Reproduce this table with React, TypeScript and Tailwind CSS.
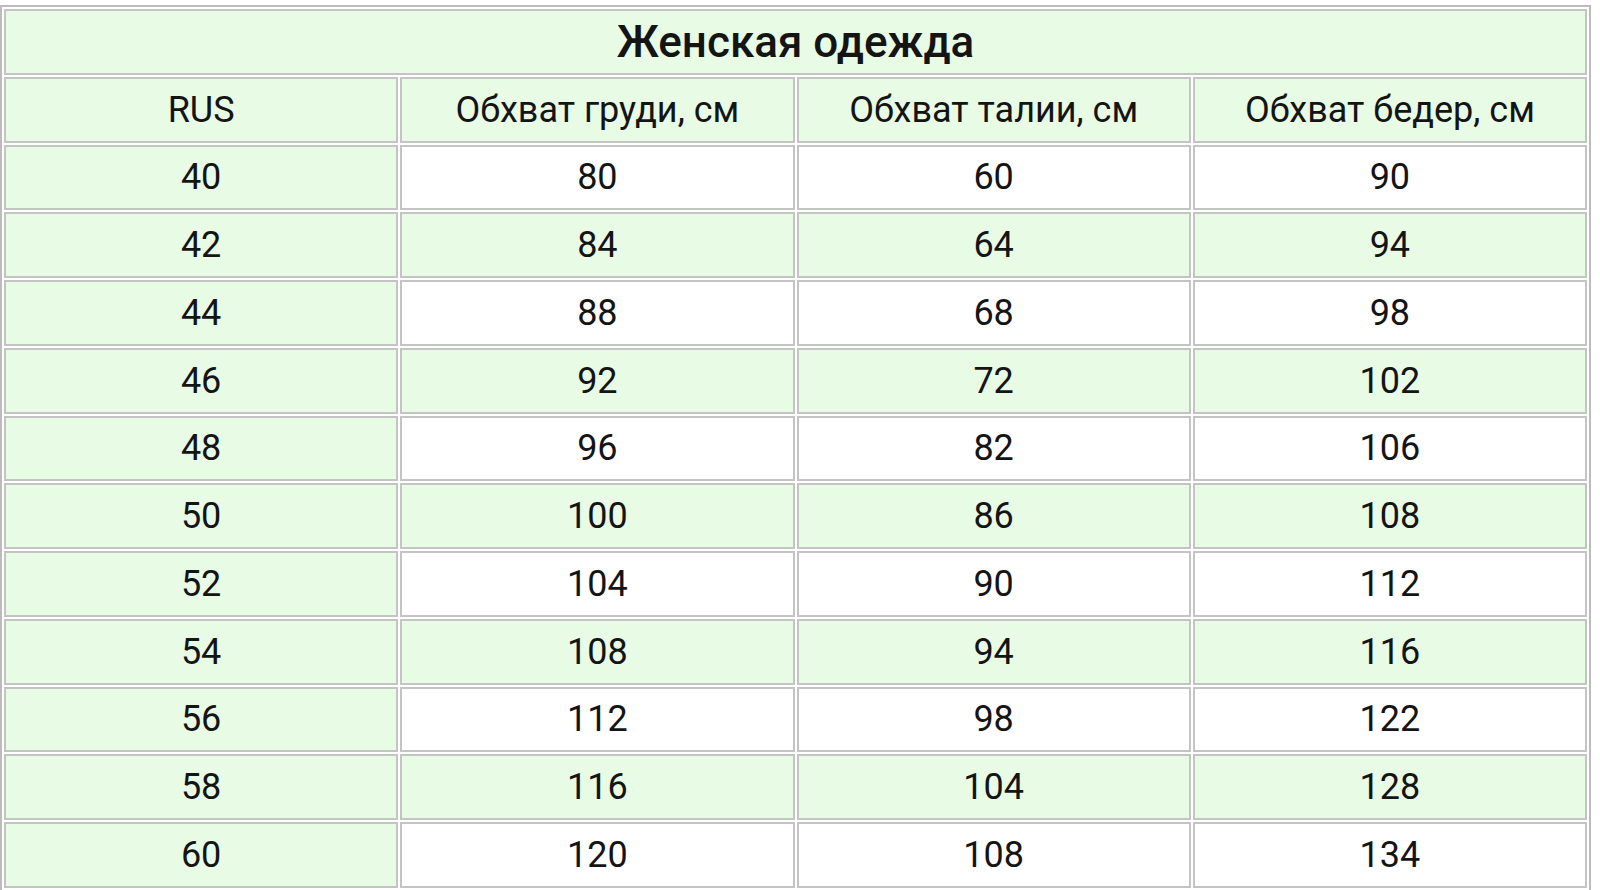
import React from "react";

const rows: [string, string, string, string][] = [
  ["40", "80", "60", "90"],
  ["42", "84", "64", "94"],
  ["44", "88", "68", "98"],
  ["46", "92", "72", "102"],
  ["48", "96", "82", "106"],
  ["50", "100", "86", "108"],
  ["52", "104", "90", "112"],
  ["54", "108", "94", "116"],
  ["56", "112", "98", "122"],
  ["58", "116", "104", "128"],
  ["60", "120", "108", "134"],
];

const headers = ["RUS", "Обхват груди, см", "Обхват талии, см", "Обхват бедер, см"];

export default function App() {
  return (
    <div
      className="w-[1600px] h-[890px] overflow-hidden bg-white pt-[5px] text-[#141414]"
      style={{ fontFamily: "Roboto, 'Noto Sans', 'Liberation Sans', sans-serif" }}
    >
      <table className="w-[1591px] table-fixed border-separate border-spacing-[2px] border-2 border-[#bcbcbc]">
        <tbody>
          <tr>
            <td
              colSpan={4}
              className="h-[65.75px] border-2 border-[#c4c4c4] bg-[#e7fbe5] p-0 text-center align-middle text-[44px] leading-none font-medium"
            >
              Женская одежда
            </td>
          </tr>
          <tr>
            {headers.map((h) => (
              <td
                key={h}
                className="h-[65.75px] border-2 border-[#c4c4c4] bg-[#e7fbe5] p-0 text-center align-middle text-[36px] leading-none"
              >
                {h}
              </td>
            ))}
          </tr>
          {rows.map((r, i) => (
            <tr key={r[0]}>
              {r.map((v, j) => {
                const green = j === 0 || i % 2 === 1;
                return (
                  <td
                    key={j}
                    className={
                      "h-[65.75px] border-2 border-[#c4c4c4] p-0 text-center align-middle text-[36px] leading-none " +
                      (green ? "bg-[#e7fbe5]" : "bg-white")
                    }
                  >
                    {v}
                  </td>
                );
              })}
            </tr>
          ))}
        </tbody>
      </table>
    </div>
  );
}
